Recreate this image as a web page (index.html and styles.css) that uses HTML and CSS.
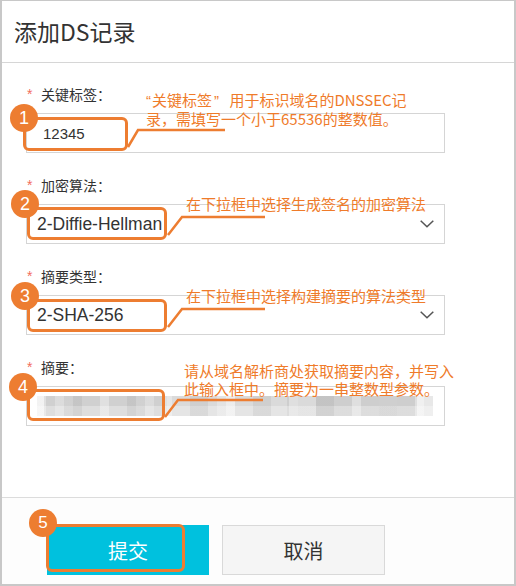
FILE: index.html
```html
<!DOCTYPE html>
<html lang="zh-CN">
<head>
<meta charset="utf-8">
<title>添加DS记录</title>
<link rel="stylesheet" href="styles.css">
</head>
<body>
<div class="dialog">
  <header class="dialog-header">
    <h1 class="dialog-title">添加DS记录</h1>
  </header>

  <main class="dialog-body">
    <div class="field">
      <div class="field-label"><span class="req">*</span>关键标签：</div>
      <div class="control input">
        <span class="value">12345</span>
        <span class="mark mark-1"></span>
        <span class="badge badge-1">1</span>
        <svg class="leader" width="419" height="40" viewBox="0 0 419 40"><polyline points="101,33 111,16 198,16"/></svg>
        <p class="note note-1"><span class="q q-open">“</span>关键标签<span class="q q-close">”</span> 用于标识域名的DNSSEC记<br>录，需填写一个小于65536的整数值。</p>
      </div>
    </div>

    <div class="field">
      <div class="field-label"><span class="req">*</span>加密算法：</div>
      <div class="control select">
        <span class="value">2-Diffie-Hellman</span>
        <svg class="chevron" width="14" height="8" viewBox="0 0 14 8"><polyline points="0.7,0.7 7,6.8 13.3,0.7"/></svg>
        <span class="mark mark-2"></span>
        <span class="badge badge-2">2</span>
        <svg class="leader" width="419" height="40" viewBox="0 0 419 40"><polyline points="141,30 155,12 238,12"/></svg>
        <p class="note note-2">在下拉框中选择生成签名的加密算法</p>
      </div>
    </div>

    <div class="field">
      <div class="field-label"><span class="req">*</span>摘要类型：</div>
      <div class="control select">
        <span class="value">2-SHA-256</span>
        <svg class="chevron" width="14" height="8" viewBox="0 0 14 8"><polyline points="0.7,0.7 7,6.8 13.3,0.7"/></svg>
        <span class="mark mark-3"></span>
        <span class="badge badge-3">3</span>
        <svg class="leader" width="419" height="40" viewBox="0 0 419 40"><polyline points="141,31 155,13 238,13"/></svg>
        <p class="note note-3">在下拉框中选择构建摘要的算法类型</p>
      </div>
    </div>

    <div class="field">
      <div class="field-label"><span class="req">*</span>摘要：</div>
      <div class="control input digest">
        <span class="blur"></span>
        <span class="mark mark-4"></span>
        <span class="badge badge-4">4</span>
        <svg class="leader" width="419" height="40" viewBox="0 0 419 40"><polyline points="138,30 151,13 236,13"/></svg>
        <p class="note note-4">请从域名解析商处获取摘要内容，并写入<br>此输入框中。摘要为一串整数型参数。</p>
      </div>
    </div>
  </main>

  <footer class="dialog-footer">
    <button type="button" class="btn btn-primary">提交
      <span class="mark mark-5"></span>
      <span class="badge badge-5">5</span>
    </button>
    <button type="button" class="btn btn-default">取消</button>
  </footer>
</div>
</body>
</html>
```

FILE: styles.css
```css
* {
  box-sizing: border-box;
  margin: 0;
  padding: 0;
}

body {
  width: 516px;
  height: 586px;
  background: #fff;
  color: #333;
  font-family: "Noto Sans CJK SC", "Microsoft YaHei", sans-serif;
}

.dialog {
  width: 516px;
  height: 586px;
  border: 2px solid #c8c8c8;
  border-top-width: 1px;
  background: #fff;
  display: flex;
  flex-direction: column;
}

.dialog-header {
  height: 62px;
  flex: none;
  border-bottom: 1px solid #d6d6d6;
  display: flex;
  align-items: center;
  padding: 0 0 2px 12px;
}

.dialog-title {
  font-size: 23px;
  font-weight: normal;
  line-height: 30px;
  color: #333;
}

.dialog-body {
  flex: 1;
  padding: 21px 0 0 24px;
  display: flex;
  flex-direction: column;
  gap: 22px;
}

.field {
  display: flex;
  flex-direction: column;
  gap: 9px;
}

.field-label {
  height: 20px;
  line-height: 20px;
  font-size: 14px;
  color: #333;
  padding-left: 1px;
  display: flex;
}

.req {
  width: 14px;
  color: #f26c5c;
  font-family: "Liberation Sans", Arial, sans-serif;
  font-size: 14px;
}

.control {
  position: relative;
  width: 419px;
  height: 40px;
  border: 1px solid #d5d5d5;
  background: #fff;
  display: flex;
  align-items: center;
}

.value {
  font-family: "Liberation Sans", Arial, sans-serif;
  color: #333;
}

.input .value {
  padding-left: 16px;
  font-size: 15px;
}

.select .value {
  padding-left: 10px;
  font-size: 17.5px;
}

.chevron {
  position: absolute;
  left: 393px;
  top: 15px;
  fill: none;
  stroke: #555;
  stroke-width: 1.5;
}

.digest {
  padding-left: 10px;
}

.blur {
  width: 396px;
  height: 20px;
  background:
    repeating-linear-gradient(90deg, rgba(255,255,255,.35) 0 9px, transparent 9px 27px, rgba(0,0,0,.05) 27px 45px, transparent 45px 63px),
    repeating-linear-gradient(90deg, transparent 0 18px, rgba(255,255,255,.25) 18px 36px, transparent 36px 81px),
    linear-gradient(180deg, transparent 0 10px, rgba(255,255,255,.3) 10px 20px),
    linear-gradient(90deg, #ececec 0 7px, #d0d0d0 7px 130px, #dadada 130px 250px, #cecece 250px 380px, #e8e8e8 380px 396px);
}

/* ---- annotation overlay ---- */
.mark {
  position: absolute;
  border: 3px solid #ed7d31;
  border-radius: 6px;
}

.mark-1 { left: -4px; top: 3px; width: 105px; height: 34px; }
.mark-2 { left: 0; top: 2px; width: 140px; height: 33px; }
.mark-3 { left: 0; top: 3px; width: 140px; height: 33px; }
.mark-4 { left: 0; top: 2px; width: 138px; height: 32px; }
.mark-5 { left: -1px; top: -1px; width: 139px; height: 48px; }

.badge {
  position: absolute;
  width: 28px;
  height: 28px;
  border-radius: 50%;
  background: #ed7d31;
  color: #fff;
  font-family: "Liberation Sans", Arial, sans-serif;
  font-size: 18px;
  line-height: 28px;
  text-align: center;
}

.badge-1 { left: -17px; top: -10px; }
.badge-2 { left: -16px; top: -15px; }
.badge-3 { left: -16px; top: -14px; }
.badge-4 { left: -18px; top: -14px; }
.badge-5 { left: -18px; top: -16px; font-size: 17px; }

.leader {
  position: absolute;
  left: 0;
  top: 0;
  overflow: visible;
  fill: none;
  stroke: #ed7d31;
  stroke-width: 2.5;
}

.note {
  position: absolute;
  white-space: nowrap;
  font-size: 15px;
  line-height: 18px;
  color: #ef7b2a;
}

.note .q {
  font-family: "Liberation Sans", Arial, sans-serif;
}

.note .q-open { margin-right: 1px; }
.note .q-close { margin-left: 2px; margin-right: 7px; }

.note-1 { left: 119px; top: -23px; }
.note-2 { left: 159px; top: -10px; }
.note-3 { left: 159px; top: -9px; }
.note-4 { left: 157px; top: -25px; }

/* ---- footer ---- */
.dialog-footer {
  height: 87px;
  flex: none;
  border-top: 1px solid #dcdcdc;
  background: #fdfdfd;
  padding: 27px 0 0 45px;
  display: flex;
  align-items: flex-start;
  gap: 13px;
}

.btn {
  position: relative;
  height: 50px;
  font-family: "Noto Sans CJK SC", "Microsoft YaHei", sans-serif;
  font-size: 20px;
  display: flex;
  align-items: center;
  justify-content: center;
  border: none;
  cursor: pointer;
}

.btn-primary {
  width: 162px;
  background: #00c1de;
  color: #fff;
}

.btn-default {
  width: 163px;
  background: #f5f5f5;
  border: 1px solid #d9d9d9;
  color: #333;
}
```
